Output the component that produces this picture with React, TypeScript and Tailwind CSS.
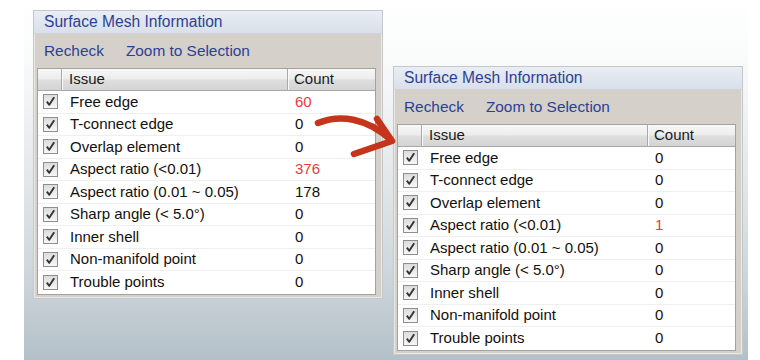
const ROWS_BEFORE: [string, string, boolean][] = [
  ['Free edge', '60', true],
  ['T-connect edge', '0', false],
  ['Overlap element', '0', false],
  ['Aspect ratio (<0.01)', '376', true],
  ['Aspect ratio (0.01 ~ 0.05)', '178', false],
  ['Sharp angle (< 5.0°)', '0', false],
  ['Inner shell', '0', false],
  ['Non-manifold point', '0', false],
  ['Trouble points', '0', false],
]

const ROWS_AFTER: [string, string, boolean][] = [
  ['Free edge', '0', false],
  ['T-connect edge', '0', false],
  ['Overlap element', '0', false],
  ['Aspect ratio (<0.01)', '1', true],
  ['Aspect ratio (0.01 ~ 0.05)', '0', false],
  ['Sharp angle (< 5.0°)', '0', false],
  ['Inner shell', '0', false],
  ['Non-manifold point', '0', false],
  ['Trouble points', '0', false],
]

function CheckBox() {
  return (
    <div className="w-[15px] h-[15px] border border-[#8e8e8e] bg-gradient-to-b from-[#dcdcdc] to-[#f7f7f7] flex items-center justify-center">
      <svg width="11" height="11" viewBox="0 0 11 11">
        <path d="M1.8 5.6 L4.3 8.8 L9.2 1.2" fill="none" stroke="#353535" strokeWidth="1.9" strokeLinejoin="round" />
      </svg>
    </div>
  )
}

function MeshPanel({ rows, className }: { rows: [string, string, boolean][]; className: string }) {
  return (
    <div className={`w-[350px] h-[289px] border border-[#c4c7cc] bg-[#d5d1ca] flex flex-col shadow-[inset_0_0_0_1px_#ebe9e5] ${className}`}>
      {/* title */}
      <div className="h-[23px] bg-gradient-to-b from-[#e9edf4] to-[#d9e0ea] border-b border-[#cfd3d9] flex items-center pl-[10px] text-[15.6px] text-[#2c3f97]">
        Surface Mesh Information
      </div>
      {/* toolbar */}
      <div className="h-[34px] flex items-center pl-[10px] gap-[22px] text-[15.4px] text-[#2c3f97]">
        <span>Recheck</span>
        <span>Zoom to Selection</span>
      </div>
      {/* table */}
      <div className="ml-[3px] mr-[6px] border border-[#a2a2a2] bg-white flex flex-col">
        <div className="h-[22px] flex text-[15px] text-[#1a1a1a] bg-[linear-gradient(to_bottom,#f7f7f7_0%,#ececec_48%,#dedede_52%,#d4d4d4_100%)] border-b border-[#a8a8a8]">
          <div className="w-[24px] border-r border-[#a9a9a9] shadow-[1px_0_0_#fafafa]" />
          <div className="w-[226px] border-r border-[#a9a9a9] shadow-[1px_0_0_#fafafa] pl-[7px] flex items-center">Issue</div>
          <div className="flex-1 pl-[6px] flex items-center">Count</div>
        </div>
        {rows.map(([label, count, bad]) => (
          <div key={label} className="h-[22.5px] flex items-center text-[15px] text-[#111111] border-b border-[#efefef] last:border-b-0">
            <div className="w-[24px] flex items-center justify-center">
              <CheckBox />
            </div>
            <div className="w-[226px] pl-[8px]">{label}</div>
            <div className={`flex-1 pl-[7px] ${bad ? 'text-[#f2373f]' : ''}`}>{count}</div>
          </div>
        ))}
      </div>
    </div>
  )
}

export default function App() {
  return (
    <div className="w-[760px] h-[360px] bg-white relative overflow-hidden font-['Liberation_Sans',Arial,sans-serif]">
      <div className="ml-[24px] w-[724px] h-[360px] bg-[linear-gradient(to_bottom,#ffffff_0%,#fafbfb_15%,#e6eaed_45%,#cfd7dc_75%,#b3c0c8_100%)] flex items-start">
        <MeshPanel rows={ROWS_BEFORE} className="ml-[9px] mt-[10px]" />
        <MeshPanel rows={ROWS_AFTER} className="ml-[10px] mt-[66px]" />
      </div>

      {/* red arrow */}
      <svg className="absolute left-0 top-0 pointer-events-none" width="760" height="360" viewBox="0 0 760 360">
        <path d="M318 123 C 340 114, 366 118, 390 139" fill="none" stroke="#c4351b" strokeWidth="6.5" strokeLinecap="round" />
        <path d="M377 119 L392 141 L354 154" fill="none" stroke="#c4351b" strokeWidth="6.5" strokeLinecap="round" strokeLinejoin="round" />
      </svg>
    </div>
  )
}
